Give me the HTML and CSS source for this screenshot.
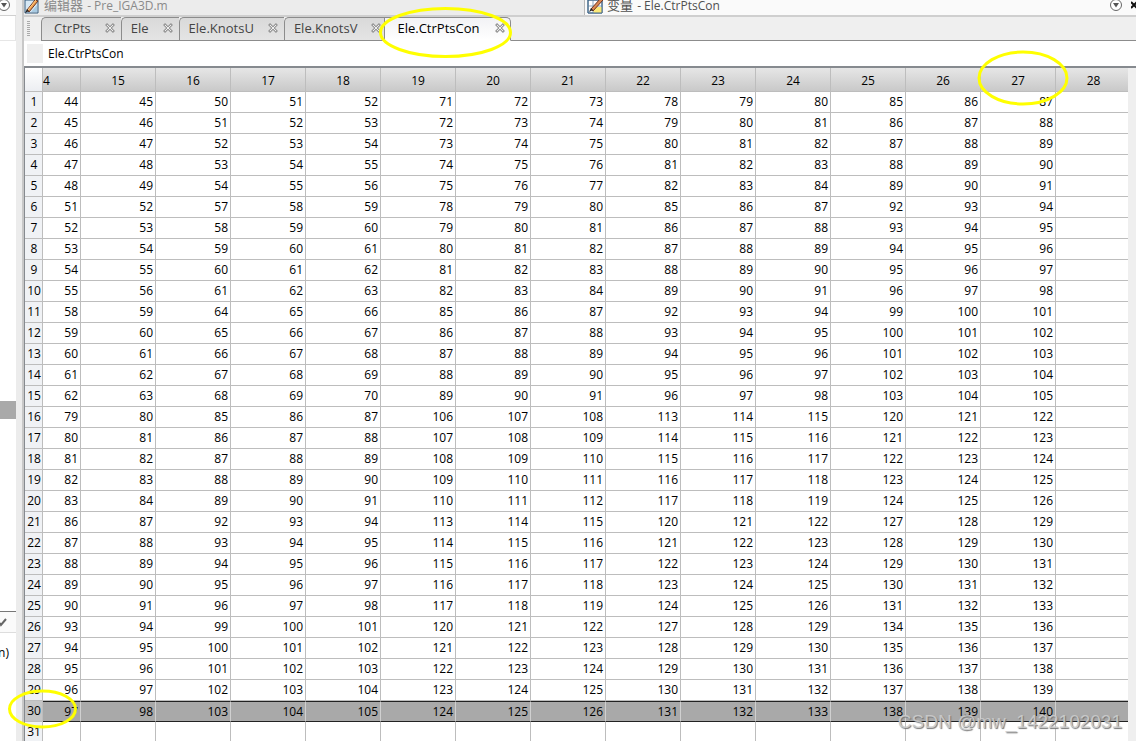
FILE: index.html
```html
<!DOCTYPE html>
<html lang="zh-CN">
<head>
<meta charset="utf-8">
<title>变量 - Ele.CtrPtsCon</title>
<link rel="stylesheet" href="styles.css">
</head>
<body>
<div class="app">
  <aside class="side">
    <div class="side-title">
      <button class="icon-btn" aria-label="Panel menu"><svg width="14" height="14" viewBox="0 0 14 14"><circle cx="7" cy="7" r="5.5" fill="#fff" stroke="#666"/><path d="M4 5h6L7 9.500z" fill="#555"/></svg></button>
    </div>
    <div class="side-tools"></div>
    <div class="side-body"><div class="side-selected"></div></div>
    <div class="side-head"><svg width="8" height="10" viewBox="0 0 8 10"><path d="M0 6l1 2L6 2" fill="none" stroke="#666" stroke-width="2"/></svg></div>
    <div class="side-details">n)</div>
  </aside>
  <main class="main">
    <header class="titles">
      <div class="title title-editor">
        <svg class="title-icon" width="16" height="14" viewBox="0 0 16 14"><path d="M1 0H14V13H1z" fill="#d7e8f4" stroke="#345a7d"/><path d="M7 12L13 5v7z" fill="#a9cbe2"/><path d="M3 10L11 0l3 1L5 12z" fill="#ef9d4c" stroke="#6b3524"/><path d="M4 10L12 0" stroke="#ffd08a"/><path d="M1 13l2-4 2 2z" fill="#222"/></svg>
        <span><span class="cjk">编辑器</span> - Pre_IGA3D.m</span>
      </div>
      <div class="title title-vars">
        <svg class="title-icon" width="16" height="14" viewBox="0 0 16 14"><path d="M1 0H15V13H1z" fill="#fff" stroke="#43688a"/><path d="M6 7h9v6H6z" fill="#fbe878"/><path d="M1 6h14M6 0v13" stroke="#8ba6bd"/><path d="M1 0H15V13H1z" fill="none" stroke="#43688a"/><path d="M4 9L13-1l3 1L6 11z" fill="#dc8750" stroke="#6b3524"/><path d="M2 12l2-4 2 2z" fill="#222"/></svg>
        <span class="title-text"><span class="cjk">变量</span> - Ele.CtrPtsCon</span>
        <button class="icon-btn" aria-label="Variables menu"><svg width="14" height="14" viewBox="0 0 14 14"><circle cx="7" cy="7" r="5.500" fill="#fff" stroke="#666"/><path d="M4 5h6L7 9.500z" fill="#555"/></svg></button>
        <button class="icon-btn close-btn" aria-label="Close"><svg width="5" height="14" viewBox="0 0 5 14"><path d="M0 4l6 6M0 10l6-6" stroke="#111" stroke-width="2"/></svg></button>
      </div>
    </header>
    <nav class="tabs" aria-label="Variables">
      <svg class="grip" width="3" height="16" viewBox="0 0 3 16"><path d="M1.500 0v16" stroke="#aaa" stroke-width="3" stroke-dasharray="1 1"/></svg>
      <button class="tab tab-first">CtrPts<svg class="x" viewBox="0 0 10 10"><path d="M1 1l8 8M9 1L1 9" stroke="#999" stroke-width="3"/><path d="M2 2l6 6M8 2L2 8" stroke="#eee"/></svg></button>
      <button class="tab">Ele<svg class="x" viewBox="0 0 10 10"><path d="M1 1l8 8M9 1L1 9" stroke="#999" stroke-width="3"/><path d="M2 2l6 6M8 2L2 8" stroke="#eee"/></svg></button>
      <button class="tab">Ele.KnotsU<svg class="x" viewBox="0 0 10 10"><path d="M1 1l8 8M9 1L1 9" stroke="#999" stroke-width="3"/><path d="M2 2l6 6M8 2L2 8" stroke="#eee"/></svg></button>
      <button class="tab tab-tight">Ele.KnotsV<svg class="x" viewBox="0 0 10 10"><path d="M1 1l8 8M9 1L1 9" stroke="#999" stroke-width="3"/><path d="M2 2l6 6M8 2L2 8" stroke="#eee"/></svg></button>
      <button class="tab tab-active">Ele.CtrPtsCon<svg class="x" viewBox="0 0 10 10"><path d="M1 1l8 8M9 1L1 9" stroke="#999" stroke-width="3"/><path d="M2 2l6 6M8 2L2 8" stroke="#eee"/></svg></button>
      <div class="tabs-rest"></div>
    </nav>
    <div class="path"><span class="path-box"></span><span>Ele.CtrPtsCon</span></div>
    <div class="sheet">
      <table class="grid">
        <colgroup id="cols"></colgroup>
        <thead><tr id="head"></tr></thead>
        <tbody id="rows"></tbody>
      </table>
    </div>
  </main>
  <svg class="marks" aria-hidden="true">
    <ellipse cx="445.500" cy="32.500" rx="65" ry="24"/>
    <ellipse cx="1023" cy="78" rx="44" ry="26"/>
    <ellipse cx="42.500" cy="709" rx="33" ry="18"/>
  </svg>
  <div class="watermark">CSDN @mw_1422102031</div>
</div>
<script src="script.js"></script>
</body>
</html>
```
FILE: styles.css
```css
* { box-sizing: border-box; }
body {
  margin: 0;
  overflow: hidden;
  background: #ececec;
  color: #000;
  font-family: "Open Sans", "Noto Sans", "Noto Sans CJK SC", sans-serif;
  font-size: 12px;
}
button { font: inherit; color: inherit; border: 0; background: none; padding: 0; margin: 0; }
.app { position: relative; display: flex; height: 100vh; overflow: hidden; }

.side { display: flex; flex-direction: column; width: 16px; flex: none; background: #fff; overflow: hidden; }
.side-title { display: flex; height: 16px; flex: none; align-items: flex-start; justify-content: center; background: #fafafa; border-bottom: 1px solid #d0d0d0; padding-right: 8px; }
.side-tools { height: 25px; flex: none; border-bottom: 1px solid #e6e6e6; border-right: 1px solid #e6e6e6; }
.side-body { flex: 1; display: flex; flex-direction: column; justify-content: flex-end; padding-bottom: 192px; }
.side-selected { height: 18px; background: #a9a9a9; }
.side-head { display: flex; align-items: center; height: 22px; flex: none; background: #fafafa; border-top: 1px solid #777; border-bottom: 1px solid #ddd; }
.side-details { display: flex; justify-content: flex-end; height: 108px; flex: none; padding: 11px 7px 0 0; line-height: 18px; }

.main { display: flex; flex-direction: column; flex: 1; min-width: 0; margin-left: 6px; border-left: 2px solid #c8c8c8; }
.titles { display: flex; height: 17px; flex: none; border-bottom: 2px solid #cfcfcf; }
.title { display: flex; align-items: flex-start; gap: 4px; height: 15px; overflow: hidden; line-height: 10px; white-space: nowrap; }
.title-icon { flex: none; }
.cjk { font-family: "Noto Sans CJK SC", sans-serif; font-size: 13px; line-height: 10px; margin-right: 1px; }
.title-editor { flex: 1; color: #8a8a8a; background: #ececec; }
.title-vars { width: 552px; flex: none; padding-left: 2px; color: #505050; background: #fafafa; border-left: 1px solid #b8b8b8; }
.title-text { flex: 1; }
.icon-btn { display: block; height: 14px; flex: none; line-height: 0; margin-top: -2px; }
.close-btn { margin-left: 4px; }

.tabs { display: flex; height: 24px; flex: none; background: #efefef; font-size: 13px; color: #444; }
.grip { margin: 4px 0 0 3px; flex: none; }
.tabs-rest { flex: 1; border-bottom: 1px solid #8c8c8c; }
.tab {
  display: flex; align-items: center; gap: 14px; flex: none;
  padding: 0 6px 2px 9px; line-height: 20px;
  border: 1px solid #8c8c8c; border-right-width: 0; border-radius: 5px 0 0 0;
  background: linear-gradient(#d9d9d9, #e4e4e4);
}
.tab-first { margin-left: 11px; padding-left: 12px; }
.tab-tight { padding-right: 3px; }
.tab-active {
  gap: 16px; color: #000; padding: 0 5px 2px 12px; border-right-width: 1px; border-bottom-color: #fff;
  border-radius: 0 5px 0 0; background: linear-gradient(#f2f2f5, #fff);
}
.x { width: 10px; height: 10px; flex: none; }

.path { display: flex; align-items: center; gap: 5px; height: 25px; flex: none; padding-left: 3px; background: #fff; }
.path-box { width: 16px; height: 19px; background: #efefef; }

.sheet { flex: 1; min-height: 0; overflow: hidden; padding-right: 8px; border-top: 2px solid #868a8f; border-left: 1px solid #868a8f; background: #efefef; }
.grid { width: 100%; table-layout: fixed; border-collapse: separate; border-spacing: 0; background: #fff; }
.col-num { width: 18px; }
.col-cut { width: 38px; }
.col { width: 75px; }
.grid th, .grid td { height: 21px; padding: 0 1px 0 0; line-height: 20px; font-weight: 400; border-right: 1px solid #bdbdbd; border-bottom: 1px solid #bdbdbd; white-space: nowrap; overflow: hidden; }
.grid tr > :last-child { border-right: 0; }
.grid td { text-align: right; padding-right: 2px; }
.grid tbody th { text-align: center; padding: 0 0 0 1px; background: #f0f2f5; }
.grid thead th { height: 24px; padding: 2px 0 0; text-align: center; background: linear-gradient(#e6e6e6, #c9c9c9); }
.grid thead th:first-child { background: linear-gradient(#fff, #eceef2); }
.grid thead .cut { text-align: left; }
.grid thead th:last-child { padding-left: 3px; }
.grid .selected td { line-height: 19px; background: #a9a9a9; border-top: 1px solid #222; border-bottom-color: #222; border-right-color: #d0d0d0; }
.grid .selected th { background: #c6c6c6; }

.marks { position: absolute; inset: 0; width: 100%; height: 100%; pointer-events: none; fill: none; stroke: #ff0; stroke-width: 3; }
.watermark { position: absolute; right: 14px; bottom: 8px; font-family: "Liberation Sans", sans-serif; font-size: 19px; line-height: 22px; color: rgba(205, 205, 205, 0.9); text-shadow: 1px 1px 1px #777; pointer-events: none; }
```
FILE: script.js
```js
// Control point numbers: each row is its first value plus fixed column offsets.
const offsets = [0, 1, 6, 7, 8, 27, 28, 29, 34, 35, 36, 41, 42, 43];
const layers = [44, 51, 58, 79, 86, 93];
const selectedRow = 30;

function add(parent, tag, text, className) {
  const el = document.createElement(tag);
  if (text !== undefined) el.textContent = text;
  if (className) el.className = className;
  parent.appendChild(el);
  return el;
}

const cols = document.getElementById("cols");
const head = document.getElementById("head");
add(cols, "col", undefined, "col-num");
add(cols, "col", undefined, "col-cut");
add(head, "th", "");
add(head, "th", "4", "cut");
for (let c = 15; c <= 28; c++) {
  add(cols, "col", undefined, c < 28 ? "col" : "");
  add(head, "th", c);
}

const rows = document.getElementById("rows");
for (let r = 1; r <= 31; r++) {
  const row = add(rows, "tr", undefined, r === selectedRow ? "selected" : "");
  add(row, "th", r);
  const first = layers[Math.floor((r - 1) / 5)] + (r - 1) % 5;
  offsets.forEach(o => add(row, "td", r <= 30 ? first + o : ""));
  add(row, "td", "");
}
```
